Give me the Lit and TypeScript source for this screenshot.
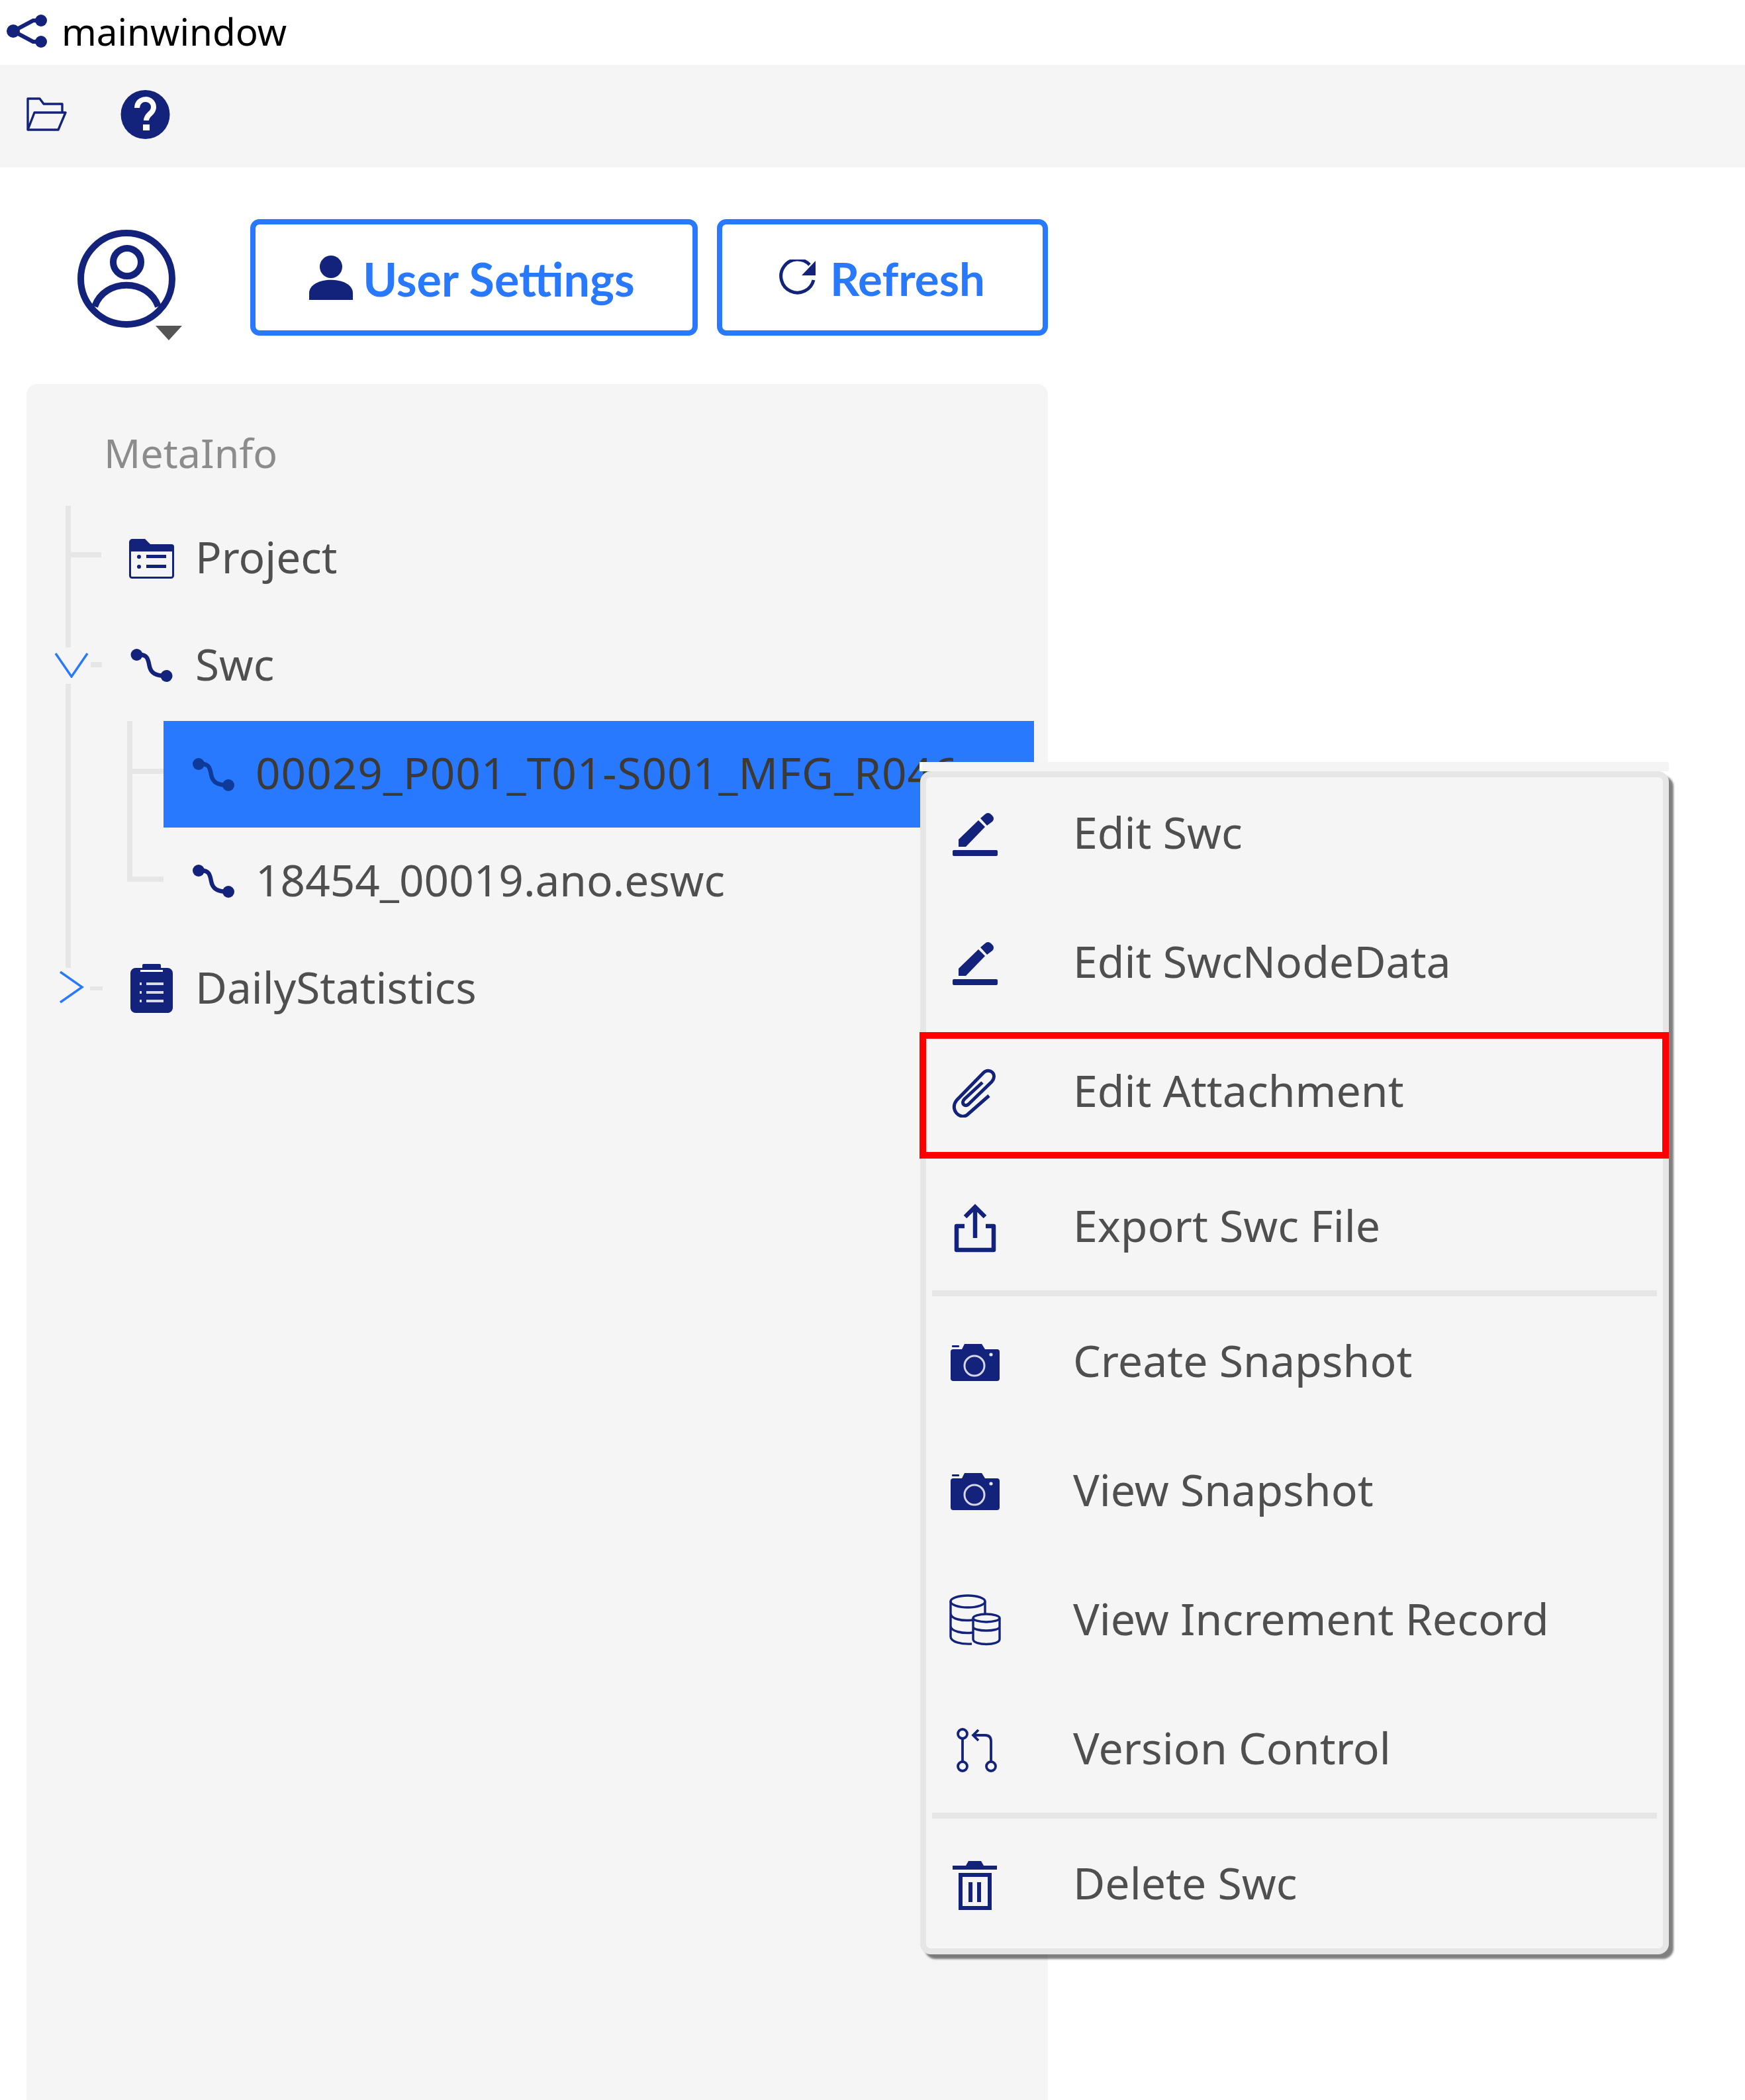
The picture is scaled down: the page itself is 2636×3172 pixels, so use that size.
import { LitElement, html, css, svg } from 'lit';
import { customElement } from 'lit/decorators.js';

const pencil = svg`<path d="M16 50 L46 21 L56 31 L27 61 H16 Z"/><path d="M49 18 L56 12 a6 6 0 0 1 9 0 l2 2 a6 6 0 0 1 0 9 L59 29 Z"/><rect x="7" y="66" width="68" height="9" rx="2"/>`;
const clip = svg`<path class="line" stroke-width="5" d="M62 47 L29 76 C18 84 2 68 13 54 L54 12 C62 4 76 14 66 26 L31 60 C25 65 19 58 25 52 L52 27"/>`;
const exportIcon = svg`<path class="line" stroke-width="6.5" stroke-linejoin="round" d="M25 40 H13 V76 H69 V40 H57"/><path class="line" stroke-width="6.5" d="M41 58 V12 M26 26 L41 11 L56 26"/>`;
const camera = svg`<path d="M21 22 L25 14 H51 L56 22 H74 a4 4 0 0 1 4 4 V66 a4 4 0 0 1 -4 4 H8 a4 4 0 0 1 -4 -4 V26 a4 4 0 0 1 4 -4 Z"/><rect x="6" y="16" width="11" height="3" rx="1"/><circle cx="40" cy="47" r="15" fill="none" stroke="#d4d6e6" stroke-width="3"/><circle cx="65" cy="30" r="2.6" fill="#e8e9f2"/>`;
const database = svg`<g class="line" stroke-width="3.4"><ellipse cx="30" cy="13" rx="26" ry="9"/><path d="M4 13 V66 C4 74 20 78 36 77 M56 13 V32 M4 31 C4 39 20 43 37 41 M4 50 C4 58 22 62 37 60"/><ellipse cx="58" cy="38" rx="20" ry="6"/><path d="M38 38 V70 C38 80 78 80 78 70 V38 M38 51 C38 59 78 59 78 51"/></g>`;
const branch = svg`<g class="line" stroke-width="3.8"><circle cx="22" cy="18" r="7"/><circle cx="22" cy="67" r="7"/><circle cx="65" cy="67" r="7"/><path d="M22 25 V60 M65 60 V29 Q65 20 56 20 H39 M46 12 L38 20 L46 28"/></g>`;
const trash = svg`<path d="M27 13 L31 6 H50 L54 13 H74 V19 H7 V13 Z"/><path class="line" stroke-width="6" d="M19 27 V77 H63 V27 Z"/><rect x="31" y="38" width="6" height="30"/><rect x="44" y="38" width="6" height="30"/>`;

const swcCurve = svg`<circle cx="9" cy="9" r="9"/><circle cx="54" cy="41" r="9"/><path class="line" stroke-width="6.5" d="M9 9 H14 C24 9 26 14 28 25 C30 37 38 41 54 41"/>`;

const menuItems = [
  { icon: pencil, label: 'Edit Swc' },
  { icon: pencil, label: 'Edit SwcNodeData' },
  { icon: clip, label: 'Edit Attachment', gapAfter: true },
  { icon: exportIcon, label: 'Export Swc File', divider: true },
  { icon: camera, label: 'Create Snapshot' },
  { icon: camera, label: 'View Snapshot' },
  { icon: database, label: 'View Increment Record' },
  { icon: branch, label: 'Version Control', divider: true },
  { icon: trash, label: 'Delete Swc' },
];

@customElement('app-root')
export class AppRoot extends LitElement {
  static styles = css`
    :host {
      display: block;
      position: relative;
      width: 2636px;
      height: 3172px;
      overflow: hidden;
      background: #fff;
      font-family: 'Noto Sans', sans-serif;
      color: #4f4f4f;
    }
    svg { display: block; flex: none; fill: #13227a; }
    .line { fill: none; stroke: #13227a; }
    .titlebar {
      box-sizing: border-box;
      height: 98px;
      display: flex;
      align-items: center;
      gap: 21px;
      padding: 0 0 4px 10px;
      font-size: 56.5px;
      color: #000;
    }
    .toolbar {
      box-sizing: border-box;
      height: 155px;
      display: flex;
      align-items: center;
      gap: 81px;
      padding: 0 0 5px 40px;
      background: #f5f5f5;
    }
    .actions {
      display: flex;
      align-items: flex-start;
      padding: 78px 0 0 117px;
    }
    .avatar { position: relative; width: 159px; height: 148px; margin-right: 102px; margin-top: 16px; }
    .caret {
      position: absolute;
      left: 118px;
      top: 145px;
      border-left: 20px solid transparent;
      border-right: 20px solid transparent;
      border-top: 22px solid #555;
    }
    .btn {
      box-sizing: border-box;
      height: 176px;
      display: flex;
      align-items: center;
      justify-content: center;
      border: 8px solid #2979ff;
      border-radius: 14px;
      background: #fff;
      color: #2979ff;
      font-family: Lato, sans-serif;
      font-weight: 700;
      font-size: 70px;
    }
    .btn span { margin-top: 3px; }
    .btn-user { width: 676px; gap: 15px; margin-right: 29px; padding-right: 6px; }
    .btn-refresh { width: 500px; gap: 21px; font-size: 69px; padding-right: 3px; }
    .btn-refresh svg { margin-top: 4px; }
    .sidebar {
      position: relative;
      width: 1543px;
      height: 2592px;
      margin: 73px 0 0 40px;
      background: #f5f5f5;
      border-radius: 16px 16px 0 0;
      font-size: 65.7px;
    }
    .heading {
      box-sizing: border-box;
      height: 182px;
      display: flex;
      align-items: center;
      padding: 24px 0 0 117px;
      font-size: 61px;
      color: #8c8c8c;
    }
    .row {
      height: 162px;
      display: flex;
      align-items: center;
      padding-left: 155px;
    }
    .row .label { margin: -6px 0 0 32px; }
    .row > svg { width: 68px; }
    .child {
      box-sizing: border-box;
      margin-left: 207px;
      padding-left: 44px;
      width: 1315px;
      white-space: nowrap;
    }
    .child > svg { width: 63px; }
    .selected { height: 161px; margin-top: 3px; background: #2979ff; color: #3d3a35; letter-spacing: 1px; }
    .selected svg { fill: #0e3a9a; }
    .selected .line { stroke: #0e3a9a; }
    .guide { position: absolute; background: #e6e6e6; }
    .g-main-a { left: 59px; top: 184px; width: 8px; height: 214px; }
    .g-main-b { left: 59px; top: 453px; width: 8px; height: 429px; }
    .g-project { left: 67px; top: 254px; width: 46px; height: 8px; }
    .g-swc { left: 97px; top: 420px; width: 17px; height: 8px; }
    .g-sub { left: 152px; top: 509px; width: 8px; height: 243px; }
    .g-sel { left: 160px; top: 581px; width: 47px; height: 8px; }
    .g-last { left: 160px; top: 744px; width: 47px; height: 8px; }
    .g-daily { left: 96px; top: 910px; width: 19px; height: 6px; }
    .chevron { position: absolute; fill: none; stroke: #2979ff; stroke-width: 3.5; }
    .ch-down { left: 42px; top: 406px; }
    .ch-right { left: 49px; top: 886px; }

    .menu { position: absolute; left: 1389px; top: 1151px; width: 1132px; }
    .menu-cap { height: 14px; background: #f4f4f4; border-left: 4px solid #fff; box-sizing: border-box; }
    .panel {
      box-sizing: border-box;
      height: 1787px;
      margin-left: 1px;
      background: #f5f5f5;
      border: 9px solid #e6e6e6;
      border-radius: 16px;
      box-shadow: 7px 7px 3px rgba(0, 0, 0, 0.5);
    }
    .menu-list { margin-top: -14px; }
    .item {
      height: 195px;
      display: flex;
      align-items: center;
      padding-left: 33px;
      gap: 109px;
      font-size: 66.2px;
    }
    .item span { margin-top: -3px; }
    .spacer { height: 9px; }
    .divider { height: 9px; margin: 0 9px; background: #e6e6e6; }
    .highlight {
      position: absolute;
      box-sizing: border-box;
      left: 1389px;
      top: 1559px;
      width: 1132px;
      height: 191px;
      border: 10px solid #f00;
    }
  `;

  renderMenu() {
    return menuItems.map(
      (m) => html`
        <div class="item">
          <svg width="80" height="80" viewBox="0 0 80 80">${m.icon}</svg>
          <span>${m.label}</span>
        </div>
        ${m.divider ? html`<div class="divider"></div>` : m.gapAfter ? html`<div class="spacer"></div>` : ''}
      `
    );
  }

  render() {
    return html`
      <div class="titlebar">
        <svg width="62" height="50" viewBox="10 21 62 50">
          <circle cx="20" cy="46" r="10" /><circle cx="62" cy="30" r="9" /><circle cx="62" cy="62" r="9" />
          <path class="line" stroke-width="6" d="M62 30 H50 L20 46 L50 62 H62" />
        </svg>
        <span>mainwindow</span>
      </div>

      <div class="toolbar">
        <svg width="61" height="52" viewBox="40 148 61 52">
          <path class="line" stroke-width="3.4" stroke-linejoin="round"
            d="M42 197 V150 H60 L66 158 H94 V171 M42 197 H88 L99 171 H52 L42 197 Z" />
        </svg>
        <svg width="75" height="74" viewBox="182 136 75 74">
          <circle cx="219.5" cy="173" r="37" />
          <path d="M207 163 C207 146 232 146 232 162 C232 172 221 172 221 182" fill="none" stroke="#fff" stroke-width="8" />
          <rect x="216" y="188" width="10" height="9" fill="#fff" />
        </svg>
      </div>

      <div class="actions">
        <div class="avatar">
          <svg width="148" height="148" viewBox="117 347 148 148">
            <g class="line" stroke-width="10">
              <circle cx="191" cy="421" r="69" />
              <circle cx="192" cy="396" r="21" />
              <path d="M143 463 C158 420 224 420 239 463" />
            </g>
          </svg>
          <div class="caret"></div>
        </div>
        <div class="btn btn-user">
          <svg width="66" height="67" viewBox="465 388 66 67">
            <circle cx="498" cy="405" r="17" />
            <path d="M465 455 V445 C465 418 531 418 531 445 V455 Z" />
          </svg>
          <span>User Settings</span>
        </div>
        <div class="btn btn-refresh">
          <svg width="58" height="58" viewBox="1175 392 58 58">
            <path class="line" stroke-width="5" d="M1223 400 A25 25 0 1 0 1229 423" />
            <path d="M1232 394 V416 H1211 Z" />
          </svg>
          <span>Refresh</span>
        </div>
      </div>

      <div class="sidebar">
        <div class="guide g-main-a"></div>
        <div class="guide g-main-b"></div>
        <div class="guide g-project"></div>
        <div class="guide g-swc"></div>
        <div class="guide g-sub"></div>
        <div class="guide g-sel"></div>
        <div class="guide g-last"></div>
        <div class="guide g-daily"></div>
        <svg class="chevron ch-down" width="52" height="38" viewBox="0 0 52 38"><path d="M2 1 L26 36 L50 1" /></svg>
        <svg class="chevron ch-right" width="38" height="50" viewBox="0 0 38 50"><path d="M2 2 L35 25 L2 48" /></svg>

        <div class="heading">MetaInfo</div>
        <div class="row">
          <svg height="61" viewBox="0 0 68 61">
            <path d="M0 6 a5 5 0 0 1 5 -5 H24 L32 9 H64 a4 4 0 0 1 4 4 V20 H0 Z" />
            <rect x="1.5" y="12" width="65" height="47.5" rx="3" fill="none" stroke="#13227a" stroke-width="3" />
            <circle cx="15" cy="28" r="3" /><circle cx="15" cy="43" r="3" />
            <rect x="26" y="25" width="30" height="5" /><rect x="26" y="40" width="30" height="5" />
          </svg>
          <span class="label">Project</span>
        </div>
        <div class="row">
          <svg height="50" viewBox="0 0 63 50">${swcCurve}</svg>
          <span class="label">Swc</span>
        </div>
        <div class="row child selected">
          <svg height="50" viewBox="0 0 63 50">${swcCurve}</svg>
          <span class="label">00029_P001_T01-S001_MFG_R046...</span>
        </div>
        <div class="row child">
          <svg height="50" viewBox="0 0 63 50">${swcCurve}</svg>
          <span class="label">18454_00019.ano.eswc</span>
        </div>
        <div class="row">
          <svg height="74" viewBox="0 0 64 74">
            <path d="M8 6 H18 V2 a2 2 0 0 1 2 -2 H44 a2 2 0 0 1 2 2 V6 H56 a8 8 0 0 1 8 8 V66 a8 8 0 0 1 -8 8 H8 a8 8 0 0 1 -8 -8 V14 a8 8 0 0 1 8 -8 Z" />
            <rect x="15" y="9" width="34" height="3" fill="#fff" />
            <g fill="#d8dae8">
              <rect x="14" y="28" width="3" height="4" /><rect x="24" y="28" width="26" height="4" />
              <rect x="14" y="41" width="3" height="4" /><rect x="24" y="41" width="26" height="4" />
              <rect x="14" y="54" width="3" height="4" /><rect x="24" y="54" width="26" height="4" />
            </g>
          </svg>
          <span class="label">DailyStatistics</span>
        </div>
      </div>

      <div class="menu">
        <div class="menu-cap"></div>
        <div class="panel">
          <div class="menu-list">${this.renderMenu()}</div>
        </div>
      </div>
      <div class="highlight"></div>
    `;
  }
}
